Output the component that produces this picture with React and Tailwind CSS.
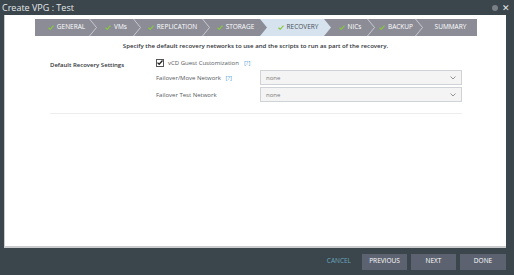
const steps = [
  { label: 'GENERAL', w: 'w-[55px]', done: true },
  { label: 'VMs', w: 'w-[44px]', done: true },
  { label: 'REPLICATION', w: 'w-[69px]', done: true },
  { label: 'STORAGE', w: 'w-[57px]', done: true },
  { label: 'RECOVERY', w: 'w-[64px]', done: true, active: true },
  { label: 'NICs', w: 'w-[44px]', done: true },
  { label: 'BACKUP', w: 'w-[48px]', done: true },
  { label: 'SUMMARY', w: 'w-[61px]', done: false },
]

const Tick = () => (
  <svg width="6" height="5" viewBox="0 0 6 5" className="mr-[3px] shrink-0">
    <path d="M0.5 2.8 L2.2 4.3 L5.5 0.6" fill="none" stroke="#86c83c" strokeWidth="1.2" />
  </svg>
)

const Separator = () => (
  <svg width="9" height="17" viewBox="0 0 9 17" className="absolute right-[-8px] top-0 z-20">
    <path d="M0.5 0 L7.5 8.5 L0.5 17" fill="none" stroke="#c9cad0" strokeWidth="1" />
  </svg>
)

const Step = ({ step, last, nextActive }) => {
  if (step.active) {
    return (
      <div className="relative z-10 mr-[-7px] flex w-[71px] items-center justify-center bg-[#d6e3ee] pl-[5px] text-[#4a4f58] [clip-path:polygon(0_0,calc(100%-7px)_0,100%_50%,calc(100%-7px)_100%,0_100%,7px_50%)]">
        <Tick />
        {step.label}
      </div>
    )
  }
  return (
    <div className={`relative flex ${step.w} items-center justify-center pl-[8px] text-white`}>
      {step.done && <Tick />}
      {step.label}
      {!last && !nextActive && <Separator />}
    </div>
  )
}

const Help = () => <span className="ml-[3px] text-[#5a9fd8]">[?]</span>

const Select = () => (
  <div className="flex h-[15px] w-[202px] items-center justify-between border border-[#cfd2d6] bg-[#f4f4f4] pl-[5px] pr-[5px] text-[#7a7a7a]">
    <span>none</span>
    <svg width="6" height="4" viewBox="0 0 6 4">
      <path d="M0.5 0.5 L3 3 L5.5 0.5" fill="none" stroke="#8a8a8a" strokeWidth="0.9" />
    </svg>
  </div>
)

const App = () => {
  return (
    <div className="flex h-[275px] w-[514px] flex-col bg-[#3a454c] font-['Open_Sans',sans-serif]">
      <header className="flex h-[15px] items-center justify-between pl-[2px] pr-[4px]">
        <p className="text-[9px] leading-none text-[#e6e8ea]">Create VPG : Test</p>
        <div className="flex items-center gap-[4px]">
          <span className="h-[6px] w-[6px] rounded-full bg-[#7a8086]" />
          <span className="text-[9px] leading-none text-[#e6e8ea]">✕</span>
        </div>
      </header>

      <main className="ml-[4px] flex h-[233px] w-[502px] flex-col border-b-2 border-l border-[#c9cbcd] bg-white">
        <nav className="ml-[30px] mt-[4px] flex h-[17px] w-[442px] bg-[#8b8c96] text-[6.5px] leading-none">
          {steps.map((s, i) => (
            <Step key={s.label} step={s} last={i === steps.length - 1} nextActive={steps[i + 1]?.active} />
          ))}
        </nav>

        <p className="mt-[6px] text-center text-[6.1px] font-semibold leading-[8px] text-[#2f3338]">
          Specify the default recovery networks to use and the scripts to run as part of the recovery.
        </p>

        <div className="ml-[45px] mt-[7px] w-[412px] text-[6px] leading-none text-[#555a60]">
          <div className="flex">
            <div className="w-[106px] pt-[5px] font-semibold text-[#2f3338]">Default Recovery Settings</div>
            <div className="flex flex-col">
              <div className="flex h-[11px] items-center">
                <span className="mr-[4px] flex h-[8px] w-[8px] items-center justify-center border border-[#555] bg-white">
                  <svg width="6" height="5" viewBox="0 0 6 5">
                    <path d="M0.5 2.6 L2.2 4.3 L5.5 0.5" fill="none" stroke="#222" strokeWidth="1.3" />
                  </svg>
                </span>
                vCD Guest Customization <span className="ml-[2px]"><Help /></span>
              </div>
              <div className="mt-[2px] flex items-center">
                <div className="w-[104px]">
                  Failover/Move Network <Help />
                </div>
                <Select />
              </div>
              <div className="mt-[2px] flex items-center">
                <div className="w-[104px]">Failover Test Network</div>
                <Select />
              </div>
            </div>
          </div>
          <div className="mt-[11px] h-px bg-[#ebedef]" />
        </div>
      </main>

      <footer className="flex flex-1 items-center justify-end pr-[8px] text-[6.5px] leading-none">
        <span className="mr-[11px] text-[#6aa7bd]">CANCEL</span>
        <div className="flex gap-[4px]">
          <button className="h-[16px] w-[45px] bg-[#5c6270] text-white">PREVIOUS</button>
          <button className="h-[16px] w-[45px] bg-[#5c6270] text-white">NEXT</button>
          <button className="h-[16px] w-[46px] bg-[#5c6270] text-white">DONE</button>
        </div>
      </footer>
    </div>
  )
}

export default App
